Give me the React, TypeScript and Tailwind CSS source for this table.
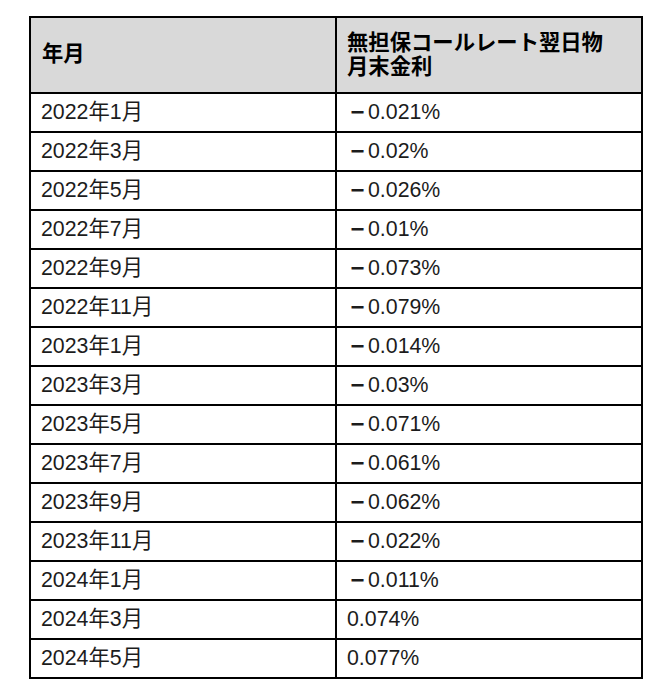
const rows: [string, string][] = [
  ['2022年1月', '－0.021%'],
  ['2022年3月', '－0.02%'],
  ['2022年5月', '－0.026%'],
  ['2022年7月', '－0.01%'],
  ['2022年9月', '－0.073%'],
  ['2022年11月', '－0.079%'],
  ['2023年1月', '－0.014%'],
  ['2023年3月', '－0.03%'],
  ['2023年5月', '－0.071%'],
  ['2023年7月', '－0.061%'],
  ['2023年9月', '－0.062%'],
  ['2023年11月', '－0.022%'],
  ['2024年1月', '－0.011%'],
  ['2024年3月', '0.074%'],
  ['2024年5月', '0.077%'],
];

function Rate({ value }: { value: string }) {
  // full-width minus drawn as a short heavy dash, like the source font
  if (value.startsWith('－')) {
    return (
      <span className="flex items-center">
        <span className="inline-block w-[21px] text-center text-[24px] leading-none font-bold">−</span>
        {value.slice(1)}
      </span>
    );
  }
  return <span>{value}</span>;
}

export default function App() {
  return (
    <div className="min-h-[694px] w-[667px] bg-white pt-[16px] pl-[29px] font-['Liberation_Sans','Noto_Sans_CJK_JP',sans-serif] text-[21.33px]">
      <div className="w-[614px] border-2 border-black">
        {/* Header */}
        <div className="grid h-[74px] grid-cols-[304px_306px] bg-[#d9d9d9] font-bold text-black">
          <div className="flex items-center pl-[11px]">年月</div>
          <div className="flex items-center border-l-2 border-black pl-[10px]">
            <div className="leading-[24px]">
              無担保コールレート翌日物
              <br />
              月末金利
            </div>
          </div>
        </div>

        {/* Rows */}
        {rows.map(([month, rate]) => (
          <div
            key={month}
            className="grid h-[39px] grid-cols-[304px_306px] border-t-2 border-black text-[#1c1c1c]"
          >
            <div className="flex items-center pl-[10px]">{month}</div>
            <div className="flex items-center border-l-2 border-black pl-[10px]">
              <Rate value={rate} />
            </div>
          </div>
        ))}
      </div>
    </div>
  );
}
